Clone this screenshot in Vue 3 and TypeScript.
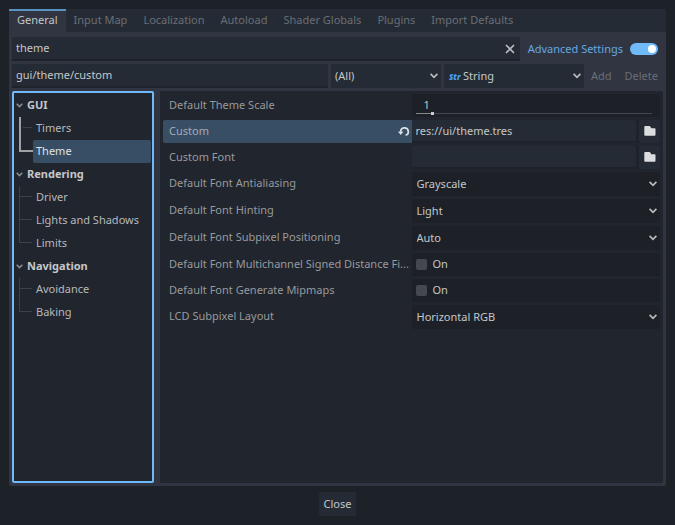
<script setup lang="ts">
import { computed, ref } from 'vue'

interface TreeGroup {
  name: string
  items: string[]
}

interface Property {
  id: string
  label: string
  kind: 'slider' | 'path' | 'enum' | 'bool'
  value: string
  options?: string[]
  changed?: boolean
}

const tabs = ['General', 'Input Map', 'Localization', 'Autoload', 'Shader Globals', 'Plugins', 'Import Defaults']
const activeTab = ref('General')

const search = ref('theme')
const advanced = ref(true)
const propertyName = ref('gui/theme/custom')
const feature = ref('(All)')
const valueType = ref('String')

const tree: TreeGroup[] = [
  { name: 'GUI', items: ['Timers', 'Theme'] },
  { name: 'Rendering', items: ['Driver', 'Lights and Shadows', 'Limits'] },
  { name: 'Navigation', items: ['Avoidance', 'Baking'] },
]
const selected = ref('Theme')

const properties = ref<Property[]>([
  { id: 'scale', label: 'Default Theme Scale', kind: 'slider', value: '1' },
  { id: 'custom', label: 'Custom', kind: 'path', value: 'res://ui/theme.tres', changed: true },
  { id: 'font', label: 'Custom Font', kind: 'path', value: '' },
  { id: 'aa', label: 'Default Font Antialiasing', kind: 'enum', value: 'Grayscale', options: ['None', 'Grayscale', 'LCD Subpixel'] },
  { id: 'hinting', label: 'Default Font Hinting', kind: 'enum', value: 'Light', options: ['None', 'Light', 'Normal'] },
  { id: 'subpixel', label: 'Default Font Subpixel Positioning', kind: 'enum', value: 'Auto', options: ['Disabled', 'Auto'] },
  { id: 'msdf', label: 'Default Font Multichannel Signed Distance Fi...', kind: 'bool', value: '' },
  { id: 'mipmaps', label: 'Default Font Generate Mipmaps', kind: 'bool', value: '' },
  { id: 'lcd', label: 'LCD Subpixel Layout', kind: 'enum', value: 'Horizontal RGB', options: ['Disabled', 'Horizontal RGB', 'Horizontal BGR'] },
])

const fill = computed(() => `${((Number(properties.value[0].value) - 0.5) / 7.5) * 100}%`)

function isLast(group: TreeGroup, item: string): boolean {
  return group.items.indexOf(item) === group.items.length - 1
}

function onSelectedPath(group: TreeGroup, item: string): boolean {
  return group.items.indexOf(item) <= group.items.indexOf(selected.value)
}
</script>

<template>
  <div class="dialog">
    <nav class="tabs">
      <button
        v-for="tab in tabs"
        :key="tab"
        type="button"
        class="tab"
        :class="{ active: tab === activeTab }"
        @click="activeTab = tab"
      >{{ tab }}</button>
    </nav>

    <main class="panel">
      <div class="row">
        <div class="field search">
          <input v-model="search" type="text" aria-label="Filter settings" />
          <button type="button" class="clear" aria-label="Clear" @click="search = ''">
            <svg width="10" height="10" viewBox="0 0 10 10"><path d="M1 1 9 9M9 1 1 9" /></svg>
          </button>
        </div>
        <label class="advanced">
          <span>Advanced Settings</span>
          <input v-model="advanced" type="checkbox" class="switch" />
        </label>
      </div>

      <div class="row">
        <input v-model="propertyName" class="field name" type="text" aria-label="Property name" />
        <div class="select feature">
          <select v-model="feature" aria-label="Feature"><option>(All)</option></select>
          <svg class="chevron" width="8" height="6" viewBox="0 0 8 6"><path d="M.6 .9 4 4.3 7.4 .9" /></svg>
        </div>
        <div class="select type">
          <span class="str" aria-hidden="true">Str</span>
          <select v-model="valueType" aria-label="Type"><option>String</option></select>
          <svg class="chevron" width="8" height="6" viewBox="0 0 8 6"><path d="M.6 .9 4 4.3 7.4 .9" /></svg>
        </div>
        <div class="actions">
          <button type="button" disabled>Add</button>
          <button type="button" disabled>Delete</button>
        </div>
      </div>

      <div class="split">
        <ul class="tree">
          <li v-for="group in tree" :key="group.name">
            <button type="button" class="group">
              <svg width="7" height="5" viewBox="0 0 7 5"><path d="M.7.8 3.5 3.6 6.3.8" /></svg>
              <span>{{ group.name }}</span>
            </button>
            <ul>
              <li v-for="item in group.items" :key="item" class="leaf">
                <svg class="guide" width="18" height="23" viewBox="0 0 18 23">
                  <template v-if="item === selected">
                    <path class="strong" d="M5 0V11H18" />
                  </template>
                  <template v-else-if="onSelectedPath(group, item)">
                    <path class="strong" d="M5 0V23" />
                    <path d="M8 10.5H17" />
                  </template>
                  <template v-else>
                    <path :d="isLast(group, item) ? 'M4.5 0V10.5' : 'M4.5 0V23'" />
                    <path d="M4 10.5H17" />
                  </template>
                </svg>
                <button type="button" :class="{ selected: item === selected }" @click="selected = item">{{ item }}</button>
              </li>
            </ul>
          </li>
        </ul>

        <section class="inspector">
          <div v-for="prop in properties" :key="prop.id" class="prop" :class="{ changed: prop.changed }">
            <div class="caption">
              <label :for="prop.id">{{ prop.label }}</label>
              <button v-if="prop.changed" type="button" class="revert" aria-label="Revert value">
                <svg width="12" height="11" viewBox="0 0 12 11">
                  <path class="arc" d="M2.7 5.8A3.8 3.8 0 1 1 7.6 9.3" />
                  <path class="head" d="M0 5.4H5.4L2.7 9Z" />
                </svg>
              </button>
            </div>

            <div v-if="prop.kind === 'slider'" class="slider">
              <input :id="prop.id" v-model="prop.value" type="text" class="number" />
              <input
                v-model="prop.value"
                type="range"
                min="0.5"
                max="8"
                step="0.01"
                :aria-label="prop.label"
                :style="{ '--fill': fill }"
              />
            </div>

            <div v-else-if="prop.kind === 'path'" class="path">
              <input :id="prop.id" v-model="prop.value" type="text" class="field" />
              <button type="button" class="browse" aria-label="Browse">
                <svg width="12" height="10" viewBox="0 0 12 10">
                  <path d="M1.2 0H5.2Q6.2 0 6.6 1L7.2 2.2H10.6Q11.5 2.2 11.5 3.1V8.8Q11.5 9.8 10.6 9.8H1.2Q.3 9.8 .3 8.8V1Q.3 0 1.2 0Z" />
                </svg>
              </button>
            </div>

            <div v-else-if="prop.kind === 'enum'" class="select dark">
              <select :id="prop.id" v-model="prop.value">
                <option v-for="option in prop.options" :key="option">{{ option }}</option>
              </select>
              <svg class="chevron" width="8" height="6" viewBox="0 0 8 6"><path d="M.6 .9 4 4.3 7.4 .9" /></svg>
            </div>

            <label v-else class="bool">
              <input :id="prop.id" type="checkbox" />
              <span>On</span>
            </label>
          </div>
        </section>
      </div>
    </main>

    <button type="button" class="close">Close</button>
  </div>
</template>

<style>
body {
  background: #1d2229;
}
</style>

<style scoped>
.dialog {
  box-sizing: border-box;
  display: flex;
  flex-direction: column;
  min-height: 100vh;
  padding: 9px;
  background: #1d2229;
  color: #c4c7ca;
  font: 11px/15px "Noto Sans", sans-serif;
}

.dialog *,
.dialog *::before {
  box-sizing: border-box;
}

button,
input,
select {
  margin: 0;
  padding: 0;
  border: 0;
  border-radius: 0;
  background: none;
  color: inherit;
  font: inherit;
  outline: none;
  appearance: none;
}

button,
select {
  cursor: pointer;
}

ul {
  margin: 0;
  padding: 0;
  list-style: none;
}

svg {
  display: block;
  flex: none;
  fill: none;
}

.tabs {
  display: flex;
  height: 23px;
  background: #252b34;
}

.tab {
  padding: 0 8px 2px;
  color: #6a6e75;
}

.tab.active {
  border-top: 2px solid #5993c4;
  padding-bottom: 4px;
  background: #303541;
  color: #c4c7ca;
}

.panel {
  display: flex;
  flex: 1;
  flex-direction: column;
  gap: 3px;
  margin-bottom: 6px;
  padding: 5px 3px 3px;
  border-radius: 0 0 2px 2px;
  background: #303541;
}

.row {
  display: flex;
  gap: 3px;
  height: 24px;
}

.field {
  min-width: 0;
  padding: 0 4px 2px;
  border-bottom: 2px solid #1e222a;
  border-radius: 2px 2px 0 0;
  background: #252b34;
}

.search {
  display: flex;
  flex: 1;
  align-items: center;
  padding-bottom: 0;
}

.search input {
  flex: 1;
  min-width: 0;
  padding-bottom: 2px;
}

.clear {
  padding: 2px 1px 0;
}

.clear path {
  stroke: #b9bbbf;
  stroke-width: 1.7;
}

.advanced {
  display: flex;
  align-items: center;
  gap: 7px;
  padding: 0 5px;
  color: #66a8e2;
}

.advanced span {
  padding-bottom: 2px;
}

.switch {
  display: flex;
  align-items: center;
  width: 28px;
  height: 12px;
  padding: 0 2px;
  border-radius: 6px;
  background: #4a4f59;
}

.switch::before {
  width: 8px;
  height: 8px;
  border-radius: 4px;
  background: #fff;
  content: "";
}

.switch:checked {
  justify-content: flex-end;
  background: #70bafa;
}

.name {
  flex: 1;
}

.select {
  display: flex;
  align-items: center;
  border-radius: 2px;
  background: #252b34;
}

.select select {
  flex: 1;
  min-width: 0;
  height: 24px;
  margin-right: -12px;
  padding: 0 16px 2px 4px;
}

.select option {
  background: #252b34;
}

.chevron {
  margin-right: 3px;
  pointer-events: none;
}

.chevron path {
  stroke: #b9bbbf;
  stroke-width: 1.7;
}

.feature {
  width: 110px;
}

.type {
  width: 140px;
}

.str {
  width: 15px;
  padding-left: 5px;
  color: #4a9cf0;
  font-size: 8px;
  font-style: italic;
  font-weight: 900;
}

.actions {
  display: flex;
  gap: 4px;
}

.actions button {
  padding: 0 5px 2px 4px;
  color: #6a6e77;
  cursor: default;
}

.split {
  display: flex;
  flex: 1;
  gap: 6px;
}

.tree {
  width: 142px;
  padding: 1px;
  border: 2px solid #70bafa;
  border-radius: 2px;
  background: #21252d;
}

.group {
  display: flex;
  align-items: center;
  gap: 4px;
  width: 100%;
  height: 23px;
  padding-left: 1px;
  font-weight: 700;
}

.group span {
  padding-bottom: 2px;
}

.group path {
  stroke: #8a8d93;
  stroke-width: 1.5;
}

.leaf {
  display: flex;
  height: 23px;
}

.leaf button {
  flex: 1;
  padding: 0 3px 2px;
  border-radius: 2px;
  color: #b6b9bd;
  text-align: left;
  white-space: nowrap;
}

.leaf .selected {
  background: #384e65;
  color: #dfe3e7;
}

.guide path {
  stroke: #3d4148;
}

.guide .strong {
  stroke: #a0a2a5;
  stroke-width: 2;
}

.inspector {
  display: flex;
  flex: 1;
  flex-direction: column;
  gap: 3px;
  min-width: 0;
  padding: 3px;
  border-radius: 2px;
  background: #21252d;
}

.prop {
  display: grid;
  grid-template-columns: minmax(0, 1fr) minmax(0, 1fr);
  min-height: 23px;
}

.caption {
  display: flex;
  align-items: center;
  height: 23px;
  padding-left: 6px;
  border-radius: 2px 0 0 2px;
  color: #979a9e;
}

.caption label {
  flex: 1;
  padding-bottom: 2px;
  white-space: nowrap;
}

.revert {
  padding-right: 2px;
}

.changed .caption {
  background: #384e65;
  color: #a5acb3;
}

.arc {
  stroke: #dfe1e4;
  stroke-width: 1.7;
}

.head {
  fill: #dfe1e4;
}

.slider,
.bool {
  border-radius: 2px;
  background: #1d2127;
}

.slider {
  display: flex;
  flex-direction: column;
  padding: 3px 8px 0 4px;
}

.number {
  width: 100%;
  height: 15px;
  padding-left: 8px;
}

.slider input[type="range"] {
  width: 100%;
  height: 3px;
  background: linear-gradient(#85888b, #85888b) 0 1px / var(--fill) 1px no-repeat,
    linear-gradient(#44484e, #44484e) 0 1px / 100% 1px no-repeat;
}

.slider input[type="range"]::-webkit-slider-thumb {
  width: 3px;
  height: 3px;
  background: #c9cbce;
  appearance: none;
}

.path {
  display: flex;
  gap: 3px;
  background: #1e222a;
}

.path .field {
  flex: 1;
  padding-bottom: 0;
}

.browse {
  display: flex;
  align-items: center;
  justify-content: center;
  width: 21px;
  padding-bottom: 1px;
  border-radius: 2px;
  background: #252b34;
}

.browse path {
  fill: #dcdddf;
}

.dark {
  background: #1d2127;
}

.dark select {
  padding-left: 5px;
}

.bool {
  display: flex;
  align-items: center;
  gap: 6px;
  padding: 0 0 1px 4px;
}

.bool input {
  width: 11px;
  height: 11px;
  border-radius: 2px;
  background: #45484f;
}

.bool input:checked {
  background: #70bafa;
}

.bool span {
  padding-bottom: 1px;
}

.close {
  align-self: center;
  height: 24px;
  padding: 0 5px 2px;
  border-radius: 2px;
  background: #252b34;
}
</style>
